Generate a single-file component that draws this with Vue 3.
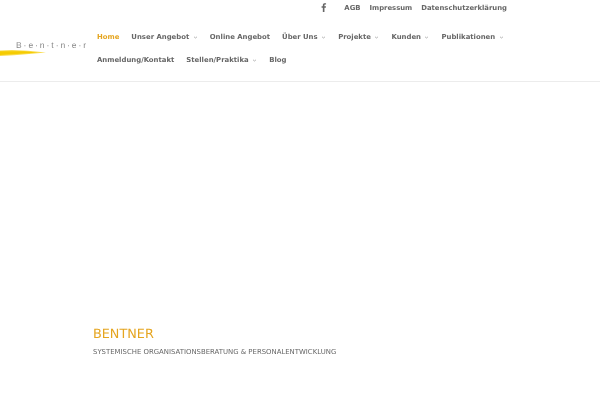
<script setup>
const row1 = [
  { t: 'Home', active: true },
  { t: 'Unser Angebot', sub: true },
  { t: 'Online Angebot' },
  { t: 'Über Uns', sub: true },
  { t: 'Projekte', sub: true },
  { t: 'Kunden', sub: true },
  { t: 'Publikationen', sub: true },
]
const row2 = [
  { t: 'Anmeldung/Kontakt' },
  { t: 'Stellen/Praktika', sub: true },
  { t: 'Blog' },
]
const rows = [row1, row2]
</script>

<template>
  <div class="page">
    <div class="topbar">
      <svg class="fb" width="6" height="9" viewBox="0 0 6 10"><path d="M1.7 10V5.4H.3V3.700h1.400V2.400C1.700.9 2.600.2 3.900.2c.6 0 1.100 0 1.400.1v1.500h-.9c-.7 0-.9.400-.9.900v1h1.700l-.2 1.700H3.500V10z" fill="#666"/></svg>
      <a class="toplink">AGB</a>
      <a class="toplink">Impressum</a>
      <a class="toplink">Datenschutzerklärung</a>
    </div>
    <header class="header">
      <div class="logo">
        <span class="wordmark">B·e·n·t·n·e·r</span>
        <svg class="brush" width="46" height="6" viewBox="0 0 46 6"><path d="M0 .5 L12 0 L28 .8 L46 2.500 L32 3.800 L14 5.200 L0 6Z" fill="#f9dc50"/><path d="M0 1.200 L24 1.200 L38 2.500 L24 3.600 L0 5Z" fill="#f5cb00"/></svg>
      </div>
      <nav class="nav">
        <div v-for="(row, i) in rows" :key="i" class="navrow">
          <a v-for="item in row" :key="item.t" class="navlink" :class="{ active: item.active }">
            {{ item.t }}
            <svg v-if="item.sub" class="chev" width="5" height="3" viewBox="0 0 5 3"><path d="M1 .8 2.500 2 4 .8" fill="none" stroke="#999" stroke-width=".7"/></svg>
          </a>
        </div>
      </nav>
    </header>
    <section class="hero">
      <h1 class="title">BENTNER</h1>
      <p class="subtitle">SYSTEMISCHE ORGANISATIONSBERATUNG &amp; PERSONALENTWICKLUNG</p>
    </section>
  </div>
</template>

<style>
html, body { margin: 0; background: #fff; }
</style>

<style scoped>
.page {
  width: 600px;
  height: 400px;
  overflow: hidden;
  background: #fff;
  font-family: "DejaVu Sans", sans-serif;
  text-rendering: geometricPrecision;
  filter: blur(0.35px);
}
.topbar {
  height: 16px;
  display: flex;
  align-items: center;
  justify-content: flex-end;
  padding-right: 93px;
  gap: 9px;
}
.fb { margin: 0 8px 2px 0; }
.toplink {
  font-size: 6.850px;
  font-weight: 700;
  color: #666;
  white-space: nowrap;
}
.header {
  height: 65px;
  display: flex;
  border-bottom: 1px solid #ececec;
  box-sizing: content-box;
}
.logo {
  width: 97px;
  flex: none;
  padding-top: 24px;
  box-sizing: border-box;
  display: flex;
  flex-direction: column;
  align-items: flex-start;
}
.wordmark {
  margin-left: 16px;
  font-size: 8.500px;
  letter-spacing: 1.950px;
  color: #888;
  line-height: 10px;
  white-space: nowrap;
  font-family: "Liberation Sans", sans-serif;
}
.brush { margin-top: 0; }
.nav {
  display: flex;
  flex-direction: column;
  padding-top: 16px;
  gap: 13px;
}
.navrow {
  display: flex;
  gap: 12px;
  height: 10px;
  align-items: center;
}
.navlink {
  font-size: 6.900px;
  font-weight: 700;
  color: #666;
  white-space: nowrap;
  display: flex;
  align-items: center;
  gap: 3.500px;
}
.navlink.active { color: #e5a520; }
.chev { margin-top: 1px; }
.hero {
  padding: 245px 0 0 93px;
}
.title {
  margin: 0;
  font-size: 12.800px;
  font-weight: 400;
  line-height: 16px;
  color: #e5a520;
}
.subtitle {
  margin: 3.500px 0 0;
  font-size: 6.920px;
  line-height: 10px;
  color: #666;
  white-space: nowrap;
}
</style>
